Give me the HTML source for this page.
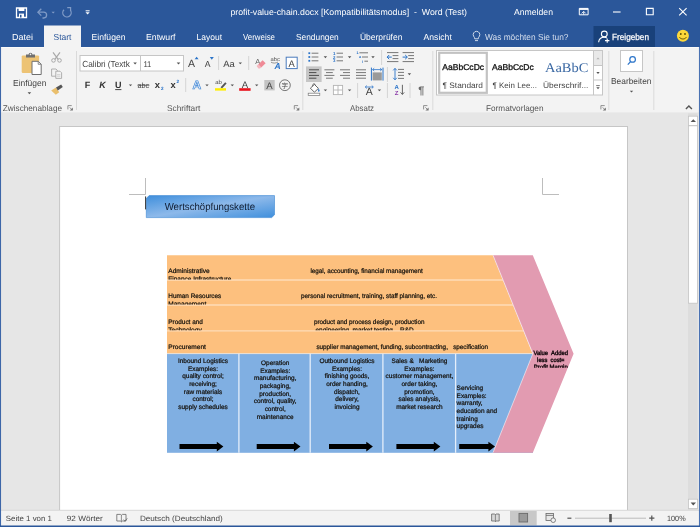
<!DOCTYPE html>
<html lang="de">
<head>
<meta charset="utf-8">
<title>profit-value-chain.docx [Kompatibilitätsmodus] - Word (Test)</title>
<style>
html,body{margin:0;padding:0;width:700px;height:527px;overflow:hidden;background:#e6e6e6}
svg{display:block;will-change:transform;font-family:"Liberation Sans","Noto Sans CJK SC",sans-serif}
text{white-space:pre}
</style>
</head>
<body>
<svg width="700" height="527" viewBox="0 0 700 527" text-rendering="geometricPrecision">
<rect x="0" y="0" width="700" height="527" fill="#e6e6e6"/>
<rect x="0" y="0" width="700" height="47" fill="#2b579a"/>
<rect x="0" y="47" width="700" height="66" fill="#f3f3f3"/>
<rect x="0" y="47" width="700" height="1" fill="#fafafa"/>
<line x1="0" y1="113" x2="700" y2="113" stroke="#dedede" stroke-width="0.8"/>
<path d="M16.5 8h10v9.5h-10z" fill="none" stroke="#fff" stroke-width="1.3"/>
<rect x="18.6" y="8" width="5.8" height="3" fill="#fff"/>
<rect x="19" y="13.6" width="5" height="3.9" fill="#fff"/>
<rect x="20" y="14.8" width="1.5" height="2.7" fill="#2b579a"/>
<path d="M38.5 12.2h5.2a2.9 2.9 0 0 1 0 5.8h-1.2" fill="none" stroke="#7f9ac6" stroke-width="1.3"/>
<path d="M41.3 8.8l-3.4 3.4 3.4 3.4" fill="none" stroke="#7f9ac6" stroke-width="1.3"/>
<path d="M51.5 11.65h3.4l-1.7 1.9z" fill="#7f9ac6"/>
<path d="M70.3 10.2a4.2 4.2 0 1 1 -6.3 -0.4" fill="none" stroke="#7f9ac6" stroke-width="1.3"/>
<path d="M67.2 7.6h3.4v3.4" fill="none" stroke="#7f9ac6" stroke-width="1.2"/>
<rect x="85.6" y="10.3" width="4" height="1" fill="#fff"/>
<path d="M85.5 12.200000000000001h4.2l-2.1 2.4z" fill="#fff"/>
<text x="230.4" y="15.3" font-size="8.7" fill="#fff" textLength="236.6" lengthAdjust="spacingAndGlyphs" xml:space="preserve">profit-value-chain.docx [Kompatibilitätsmodus]  -  Word (Test)</text>
<text x="514" y="15.3" font-size="8.7" fill="#fff" textLength="39" lengthAdjust="spacingAndGlyphs" xml:space="preserve">Anmelden</text>
<path d="M579.3 8.4h8.8v6.4h-8.8z" fill="none" stroke="#fff" stroke-width="1"/>
<rect x="579.3" y="8.4" width="8.8" height="1.5" fill="#fff"/>
<path d="M581.7 13.4l2-2 2 2M583.7 11.6v3" fill="none" stroke="#fff" stroke-width="0.9"/>
<line x1="613" y1="12" x2="620.6" y2="12" stroke="#fff" stroke-width="1.1"/>
<path d="M646.4 8.4h6.8v6.4h-6.8z" fill="none" stroke="#fff" stroke-width="1.1"/>
<path d="M679.2 8.2l7.4 7.2M686.6 8.2l-7.4 7.2" fill="none" stroke="#fff" stroke-width="1.1"/>
<rect x="44" y="25.5" width="37" height="23" fill="#f3f3f3"/>
<text x="12" y="39.6" font-size="8.7" fill="#fff" textLength="21" lengthAdjust="spacingAndGlyphs" xml:space="preserve">Datei</text>
<text x="53.5" y="39.6" font-size="8.7" fill="#2b579a" textLength="18" lengthAdjust="spacingAndGlyphs" xml:space="preserve">Start</text>
<text x="91.5" y="39.6" font-size="8.7" fill="#fff" textLength="34" lengthAdjust="spacingAndGlyphs" xml:space="preserve">Einfügen</text>
<text x="146" y="39.6" font-size="8.7" fill="#fff" textLength="29.5" lengthAdjust="spacingAndGlyphs" xml:space="preserve">Entwurf</text>
<text x="196.5" y="39.6" font-size="8.7" fill="#fff" textLength="25.5" lengthAdjust="spacingAndGlyphs" xml:space="preserve">Layout</text>
<text x="243" y="39.6" font-size="8.7" fill="#fff" textLength="32" lengthAdjust="spacingAndGlyphs" xml:space="preserve">Verweise</text>
<text x="296" y="39.6" font-size="8.7" fill="#fff" textLength="42.7" lengthAdjust="spacingAndGlyphs" xml:space="preserve">Sendungen</text>
<text x="360" y="39.6" font-size="8.7" fill="#fff" textLength="42.4" lengthAdjust="spacingAndGlyphs" xml:space="preserve">Überprüfen</text>
<text x="423.6" y="39.6" font-size="8.7" fill="#fff" textLength="28.2" lengthAdjust="spacingAndGlyphs" xml:space="preserve">Ansicht</text>
<path d="M473.6 36.2a3.3 3.3 0 1 1 5.8 0c-0.8 1-1.1 1.6-1.1 2.6h-3.6c0-1-0.3-1.6-1.1-2.6z" fill="none" stroke="#dfe6f1" stroke-width="0.9"/>
<line x1="475" y1="40.6" x2="478" y2="40.6" stroke="#dfe6f1" stroke-width="0.9"/>
<text x="485" y="39.6" font-size="8.7" fill="#d5deed" textLength="83.5" lengthAdjust="spacingAndGlyphs" xml:space="preserve">Was möchten Sie tun?</text>
<rect x="593.5" y="26" width="61.5" height="21" fill="#19417a"/>
<circle cx="604.3" cy="34" r="2.9" fill="none" stroke="#fff" stroke-width="1.1"/>
<path d="M598.6 42.3c0.4-3.4 2.6-5 5.7-5 1 0 1.9 0.2 2.6 0.6" fill="none" stroke="#fff" stroke-width="1.1"/>
<path d="M605 40.6h4.4M607.2 38.4v4.4" fill="none" stroke="#fff" stroke-width="1.1"/>
<text x="612" y="39.9" font-size="8.9" fill="#fff" textLength="37" lengthAdjust="spacingAndGlyphs" stroke="#fff" stroke-width="0.25" xml:space="preserve">Freigeben</text>
<circle cx="682.9" cy="35.8" r="6" fill="#fdd83a"/>
<circle cx="680.8" cy="34" r="0.9" fill="#5a4a00"/><circle cx="685" cy="34" r="0.9" fill="#5a4a00"/>
<path d="M679.4 37.2c1.6 2.4 5.4 2.4 7 0" fill="none" stroke="#5a4a00" stroke-width="0.9"/>
<rect x="21.7" y="55.4" width="17.4" height="17.6" fill="#edc374" rx="1.2"/>
<path d="M26 54.6h2.6a1.9 1.9 0 0 1 3.8 0h2.6v2.8h-9z" fill="#6f6f6f"/>
<circle cx="30.5" cy="54.4" r="0.8" fill="#f3f3f3"/>
<path d="M32 61.3h6.2l3 3v10.2h-9.2z" fill="#fff" stroke="#6f6f6f" stroke-width="1"/>
<path d="M38.2 61.3v3h3" fill="none" stroke="#6f6f6f" stroke-width="0.8"/>
<text x="13" y="85.7" font-size="8.8" fill="#444" textLength="33.4" lengthAdjust="spacingAndGlyphs" xml:space="preserve">Einfügen</text>
<path d="M27.599999999999998 92.2h3.6l-1.8 2z" fill="#555"/>
<path d="M53 52.4l5.4 7.2M60 52.4l-5.4 7.2" fill="none" stroke="#a8a8a8" stroke-width="1.2"/>
<circle cx="53.5" cy="60.4" r="1.8" fill="#f3f3f3" stroke="#a8a8a8" stroke-width="1"/><circle cx="59.5" cy="60.4" r="1.8" fill="#f3f3f3" stroke="#a8a8a8" stroke-width="1"/>
<path d="M51.6 69h4.4l1.4 1.4v5.8h-5.8z" fill="#f3f3f3" stroke="#a8a8a8" stroke-width="0.9"/>
<path d="M55.8 71.2h4.2l1.6 1.6v5.6h-5.8z" fill="#f3f3f3" stroke="#a8a8a8" stroke-width="0.9"/>
<line x1="57" y1="74.6" x2="60.4" y2="74.6" stroke="#c4c4c4" stroke-width="0.7"/>
<line x1="57" y1="76.2" x2="60.4" y2="76.2" stroke="#c4c4c4" stroke-width="0.7"/>
<path d="M51.2 90.6l4.8-3 3.2 4.6-3.4 2.6z" fill="#eabf6c"/>
<path d="M56 87.6l5.2-3 1.6 2.4-5 3.4z" fill="#555"/>
<rect x="0" y="0" width="0" height="0" fill="none"/>
<text x="2.8" y="110.7" font-size="8.3" fill="#555" textLength="59.2" lengthAdjust="spacingAndGlyphs" xml:space="preserve">Zwischenablage</text>
<path d="M67.89999999999999 109.4v-3.8h3.8" fill="none" stroke="#777" stroke-width="0.8"/>
<path d="M72.89999999999999 107.4v3.2h-3.2z" fill="#777"/>
<line x1="69.7" y1="107.4" x2="72.3" y2="110" stroke="#777" stroke-width="0.8"/>
<line x1="76.5" y1="51" x2="76.5" y2="110" stroke="#dadada" stroke-width="1"/>
<rect x="80" y="55.5" width="103.5" height="15.5" fill="#fff" stroke="#c6c6c6" stroke-width="1"/>
<line x1="140.5" y1="55.5" x2="140.5" y2="71" stroke="#c6c6c6" stroke-width="1"/>
<text x="82.2" y="66.6" font-size="8.8" fill="#444" textLength="47.6" lengthAdjust="spacingAndGlyphs" xml:space="preserve">Calibri (Textk</text>
<path d="M133.29999999999998 62.4h3.6l-1.8 2z" fill="#555"/>
<text x="143.4" y="66.6" font-size="8.4" fill="#444" textLength="8" lengthAdjust="spacingAndGlyphs" xml:space="preserve">11</text>
<path d="M176.7 62.4h3.6l-1.8 2z" fill="#555"/>
<text x="87.5" y="88.2" font-size="9" fill="#333" text-anchor="middle" font-weight="bold" xml:space="preserve">F</text>
<text x="102.6" y="88.2" font-size="9" fill="#333" text-anchor="middle" font-weight="bold" font-style="italic" xml:space="preserve">K</text>
<text x="118.3" y="87.8" font-size="9" fill="#333" text-anchor="middle" font-weight="bold" xml:space="preserve">U</text>
<line x1="115.2" y1="89.6" x2="121.4" y2="89.6" stroke="#333" stroke-width="0.9"/>
<path d="M128.8 84.45h3.4l-1.7 1.9z" fill="#555"/>
<text x="143.4" y="87.6" font-size="7.6" fill="#444" text-anchor="middle" textLength="11.6" lengthAdjust="spacingAndGlyphs" xml:space="preserve">abc</text>
<line x1="137.4" y1="85.2" x2="149.4" y2="85.2" stroke="#444" stroke-width="0.8"/>
<text x="157.4" y="88" font-size="9.4" fill="#333" text-anchor="middle" font-weight="bold" xml:space="preserve">x</text>
<text x="161" y="89.6" font-size="4.6" fill="#2b74c9" font-weight="bold" xml:space="preserve">2</text>
<text x="173" y="88" font-size="9.4" fill="#333" text-anchor="middle" font-weight="bold" xml:space="preserve">x</text>
<text x="176.6" y="83.4" font-size="4.6" fill="#2b74c9" font-weight="bold" xml:space="preserve">2</text>
<line x1="185.7" y1="78" x2="185.7" y2="92" stroke="#d4d4d4" stroke-width="1"/>
<text x="191.4" y="67" font-size="10.5" fill="#444" text-anchor="middle" xml:space="preserve">A</text>
<path d="M194.6 59.3h4l-2.0 -2.6z" fill="#2b74c9"/>
<text x="207.6" y="67" font-size="8.6" fill="#444" text-anchor="middle" xml:space="preserve">A</text>
<path d="M209.8 57.1h4l-2.0 2.6z" fill="#2b74c9"/>
<line x1="218.6" y1="56" x2="218.6" y2="70" stroke="#d4d4d4" stroke-width="1"/>
<text x="223.2" y="67" font-size="9.2" fill="#444" textLength="11.6" lengthAdjust="spacingAndGlyphs" xml:space="preserve">Aa</text>
<path d="M238.60000000000002 62.449999999999996h3.4l-1.7 1.9z" fill="#555"/>
<line x1="248.7" y1="56" x2="248.7" y2="70" stroke="#d4d4d4" stroke-width="1"/>
<text x="257.6" y="63.8" font-size="7.4" fill="#555" text-anchor="middle" xml:space="preserve">A</text>
<path d="M258.2 64.4l4.4-4.2 3 3-4.4 4.2z" fill="#ef8a96"/>
<path d="M256.6 66l1.6-1.6 3 3-1.2 1.2h-1.6z" fill="#f5b6bd"/>
<text x="275.2" y="60.6" font-size="5.6" fill="#555" text-anchor="middle" textLength="9.4" lengthAdjust="spacingAndGlyphs" xml:space="preserve">abc</text>
<text x="277.6" y="68.6" font-size="8.6" fill="#2b74c9" text-anchor="middle" font-weight="bold" font-style="italic" xml:space="preserve">A</text>
<path d="M271 62.2c2.4 1.2 4.6 1.2 7-0.2" fill="none" stroke="#555" stroke-width="0.6"/>
<rect x="286.2" y="57.2" width="11" height="11.4" fill="#fff" stroke="#4a7bbd" stroke-width="1"/>
<text x="291.7" y="66.8" font-size="9.4" fill="#444" text-anchor="middle" xml:space="preserve">A</text>
<text x="196.9" y="89.4" font-size="12" fill="#eef4fb" text-anchor="middle" font-weight="bold" stroke="#3f86d6" stroke-width="0.7" xml:space="preserve">A</text>
<path d="M205.3 84.45h3.4l-1.7 1.9z" fill="#555"/>
<text x="218.6" y="84.4" font-size="5.8" fill="#444" text-anchor="middle" textLength="6.6" lengthAdjust="spacingAndGlyphs" xml:space="preserve">ab</text>
<path d="M220.6 87.2l4.6-5 1.4 1.2-4.6 5z" fill="#555"/>
<rect x="215" y="88.2" width="11" height="2.4" fill="#ffee00"/>
<path d="M230.60000000000002 84.45h3.4l-1.7 1.9z" fill="#555"/>
<text x="245" y="87.6" font-size="9.6" fill="#444" text-anchor="middle" xml:space="preserve">A</text>
<rect x="239.2" y="88.2" width="11.4" height="2.6" fill="#e8131d"/>
<path d="M255.0 84.45h3.4l-1.7 1.9z" fill="#555"/>
<rect x="264.3" y="80" width="10.4" height="10.4" fill="#c4c4c4"/>
<text x="269.5" y="88.8" font-size="9.6" fill="#444" text-anchor="middle" xml:space="preserve">A</text>
<circle cx="284.9" cy="85.2" r="5.4" fill="none" stroke="#555" stroke-width="0.8"/>
<text x="284.9" y="87.9" font-size="6.6" fill="#444" text-anchor="middle" font-family="Liberation Sans, Noto Sans CJK SC, sans-serif" xml:space="preserve">字</text>
<text x="167" y="110.7" font-size="8.3" fill="#555" textLength="33.3" lengthAdjust="spacingAndGlyphs" xml:space="preserve">Schriftart</text>
<path d="M294.3 109.4v-3.8h3.8" fill="none" stroke="#777" stroke-width="0.8"/>
<path d="M299.3 107.4v3.2h-3.2z" fill="#777"/>
<line x1="296.09999999999997" y1="107.4" x2="298.7" y2="110" stroke="#777" stroke-width="0.8"/>
<line x1="302.8" y1="51" x2="302.8" y2="110" stroke="#dadada" stroke-width="1"/>
<rect x="308.4" y="52.300000000000004" width="1.8" height="1.8" fill="#2b74c9"/>
<line x1="311.6" y1="53.2" x2="318.4" y2="53.2" stroke="#777" stroke-width="1"/>
<rect x="308.4" y="56.1" width="1.8" height="1.8" fill="#2b74c9"/>
<line x1="311.6" y1="57" x2="318.4" y2="57" stroke="#777" stroke-width="1"/>
<rect x="308.4" y="59.9" width="1.8" height="1.8" fill="#2b74c9"/>
<line x1="311.6" y1="60.8" x2="318.4" y2="60.8" stroke="#777" stroke-width="1"/>
<path d="M323.7 56.25h3.4l-1.7 1.9z" fill="#555"/>
<text x="333" y="54.800000000000004" font-size="4.4" fill="#2b74c9" font-weight="bold" xml:space="preserve">1</text>
<line x1="336.6" y1="53.2" x2="343" y2="53.2" stroke="#777" stroke-width="1"/>
<text x="333" y="58.6" font-size="4.4" fill="#2b74c9" font-weight="bold" xml:space="preserve">2</text>
<line x1="336.6" y1="57" x2="343" y2="57" stroke="#777" stroke-width="1"/>
<text x="333" y="62.4" font-size="4.4" fill="#2b74c9" font-weight="bold" xml:space="preserve">3</text>
<line x1="336.6" y1="60.8" x2="343" y2="60.8" stroke="#777" stroke-width="1"/>
<path d="M347.90000000000003 56.25h3.4l-1.7 1.9z" fill="#555"/>
<text x="356.6" y="54.4" font-size="3.8" fill="#2b74c9" font-weight="bold" xml:space="preserve">1</text>
<line x1="359.4" y1="52.8" x2="368" y2="52.8" stroke="#777" stroke-width="1"/>
<text x="359" y="58.4" font-size="3.8" fill="#2b74c9" font-weight="bold" xml:space="preserve">a</text>
<line x1="362" y1="57" x2="368" y2="57" stroke="#777" stroke-width="1"/>
<text x="361.8" y="62.6" font-size="3.8" fill="#2b74c9" font-weight="bold" xml:space="preserve">i</text>
<line x1="364.4" y1="61.2" x2="368" y2="61.2" stroke="#777" stroke-width="1"/>
<path d="M371.3 56.25h3.4l-1.7 1.9z" fill="#555"/>
<line x1="381.6" y1="50" x2="381.6" y2="65" stroke="#d4d4d4" stroke-width="1"/>
<line x1="387" y1="52.6" x2="398.4" y2="52.6" stroke="#777" stroke-width="1"/>
<line x1="387" y1="61.6" x2="398.4" y2="61.6" stroke="#777" stroke-width="1"/>
<line x1="392.6" y1="55.6" x2="398.4" y2="55.6" stroke="#777" stroke-width="1"/>
<line x1="392.6" y1="58.6" x2="398.4" y2="58.6" stroke="#777" stroke-width="1"/>
<path d="M391.8 57.1h-4.6M389.2 55l-2.1 2.1 2.1 2.1" fill="none" stroke="#2b74c9" stroke-width="1"/>
<line x1="402.6" y1="52.6" x2="414.0" y2="52.6" stroke="#777" stroke-width="1"/>
<line x1="402.6" y1="61.6" x2="414.0" y2="61.6" stroke="#777" stroke-width="1"/>
<line x1="408.20000000000005" y1="55.6" x2="414.0" y2="55.6" stroke="#777" stroke-width="1"/>
<line x1="408.20000000000005" y1="58.6" x2="414.0" y2="58.6" stroke="#777" stroke-width="1"/>
<path d="M402.6 57.1h4.6M405.20000000000005 55l2.1 2.1-2.1 2.1" fill="none" stroke="#2b74c9" stroke-width="1"/>
<rect x="306" y="66.4" width="15.6" height="15.6" fill="#c6c6c6"/>
<line x1="309" y1="69.8" x2="319" y2="69.8" stroke="#4a4a4a" stroke-width="1"/>
<line x1="309" y1="72.6" x2="316.4" y2="72.6" stroke="#4a4a4a" stroke-width="1"/>
<line x1="309" y1="75.4" x2="319" y2="75.4" stroke="#4a4a4a" stroke-width="1"/>
<line x1="309" y1="78.2" x2="316.4" y2="78.2" stroke="#4a4a4a" stroke-width="1"/>
<line x1="324.4" y1="69.8" x2="334.4" y2="69.8" stroke="#777" stroke-width="1"/>
<line x1="326" y1="72.6" x2="332.8" y2="72.6" stroke="#777" stroke-width="1"/>
<line x1="324.4" y1="75.4" x2="334.4" y2="75.4" stroke="#777" stroke-width="1"/>
<line x1="326" y1="78.2" x2="332.8" y2="78.2" stroke="#777" stroke-width="1"/>
<line x1="340" y1="69.8" x2="350" y2="69.8" stroke="#777" stroke-width="1"/>
<line x1="343" y1="72.6" x2="350" y2="72.6" stroke="#777" stroke-width="1"/>
<line x1="340" y1="75.4" x2="350" y2="75.4" stroke="#777" stroke-width="1"/>
<line x1="343" y1="78.2" x2="350" y2="78.2" stroke="#777" stroke-width="1"/>
<line x1="356" y1="69.8" x2="366" y2="69.8" stroke="#777" stroke-width="1"/>
<line x1="356" y1="72.6" x2="366" y2="72.6" stroke="#777" stroke-width="1"/>
<line x1="356" y1="75.4" x2="366" y2="75.4" stroke="#777" stroke-width="1"/>
<line x1="356" y1="78.2" x2="366" y2="78.2" stroke="#777" stroke-width="1"/>
<rect x="372.6" y="72.4" width="9.2" height="8" fill="#9a9a9a"/>
<line x1="371.4" y1="67.6" x2="371.4" y2="80.6" stroke="#2b74c9" stroke-width="1"/>
<line x1="383" y1="67.6" x2="383" y2="80.6" stroke="#2b74c9" stroke-width="1"/>
<path d="M372.6 69.6h9.2M374.2 68.2l-1.6 1.4 1.6 1.4M380.2 68.2l1.6 1.4-1.6 1.4" fill="none" stroke="#2b74c9" stroke-width="0.8"/>
<line x1="387.4" y1="67" x2="387.4" y2="82" stroke="#d4d4d4" stroke-width="1"/>
<line x1="398" y1="69.4" x2="404" y2="69.4" stroke="#777" stroke-width="1"/>
<line x1="398" y1="72.4" x2="404" y2="72.4" stroke="#777" stroke-width="1"/>
<line x1="398" y1="75.4" x2="404" y2="75.4" stroke="#777" stroke-width="1"/>
<line x1="398" y1="78.4" x2="404" y2="78.4" stroke="#777" stroke-width="1"/>
<path d="M395 68.4v11.4M393.2 70.4l1.8-2 1.8 2M393.2 77.8l1.8 2 1.8-2" fill="none" stroke="#2b74c9" stroke-width="0.9"/>
<path d="M407.7 73.25h3.4l-1.7 1.9z" fill="#555"/>
<path d="M310.4 88.2l4-3.8 4 4-4 3.8z" fill="#fff" stroke="#555" stroke-width="0.9"/>
<path d="M312.6 86.4c-0.6-2.8 2.4-3.6 2.8-1" fill="none" stroke="#555" stroke-width="0.8"/>
<path d="M318.6 88.6c1 1.4 1.4 2.2 0.6 3-0.8 0.6-1.8-0.2-0.6-3z" fill="#2b74c9"/>
<rect x="308.2" y="93.2" width="11.6" height="2.2" fill="#fff" stroke="#777" stroke-width="0.7"/>
<path d="M323.7 89.45h3.4l-1.7 1.9z" fill="#555"/>
<rect x="333.4" y="85.4" width="9.2" height="9.2" fill="#fff" stroke="#b4b4b4" stroke-width="0.9"/>
<line x1="338" y1="85.4" x2="338" y2="94.6" stroke="#b4b4b4" stroke-width="0.9"/>
<line x1="333.4" y1="90" x2="342.6" y2="90" stroke="#b4b4b4" stroke-width="0.9"/>
<path d="M347.90000000000003 89.45h3.4l-1.7 1.9z" fill="#555"/>
<line x1="357.6" y1="83" x2="357.6" y2="98" stroke="#d4d4d4" stroke-width="1"/>
<text x="369.2" y="94.8" font-size="10.5" fill="#444" text-anchor="middle" transform="translate(0,0)" xml:space="preserve">A</text>
<path d="M365.6 87h7.4M366.8 85.6l-1.6 1.4 1.6 1.4M371.8 85.6l1.6 1.4-1.6 1.4" fill="none" stroke="#2b74c9" stroke-width="0.8"/>
<path d="M377.7 89.45h3.4l-1.7 1.9z" fill="#555"/>
<line x1="387.4" y1="83" x2="387.4" y2="98" stroke="#d4d4d4" stroke-width="1"/>
<text x="396.6" y="88.6" font-size="6" fill="#2b74c9" text-anchor="middle" font-weight="bold" xml:space="preserve">A</text>
<text x="396.6" y="94.8" font-size="6" fill="#8a3aa8" text-anchor="middle" font-weight="bold" xml:space="preserve">Z</text>
<path d="M402.4 84.8v9.6M400.6 92.4l1.8 2 1.8-2" fill="none" stroke="#555" stroke-width="0.9"/>
<line x1="410" y1="83" x2="410" y2="98" stroke="#d4d4d4" stroke-width="1"/>
<text x="421.4" y="94.4" font-size="11" fill="#6a6a6a" text-anchor="middle" font-weight="bold" xml:space="preserve">¶</text>
<text x="350" y="110.7" font-size="8.3" fill="#555" textLength="24" lengthAdjust="spacingAndGlyphs" xml:space="preserve">Absatz</text>
<path d="M423.6 109.4v-3.8h3.8" fill="none" stroke="#777" stroke-width="0.8"/>
<path d="M428.6 107.4v3.2h-3.2z" fill="#777"/>
<line x1="425.4" y1="107.4" x2="428" y2="110" stroke="#777" stroke-width="0.8"/>
<line x1="432.8" y1="51" x2="432.8" y2="110" stroke="#dadada" stroke-width="1"/>
<rect x="436.5" y="50.5" width="166" height="44.5" fill="#fff" stroke="#c6c6c6" stroke-width="1"/>
<rect x="439.2" y="52.8" width="47.6" height="40" fill="#fff" stroke="#c2c2c2" stroke-width="2.2"/>
<text x="442.3" y="70" font-size="8.4" fill="#111" textLength="41.8" lengthAdjust="spacingAndGlyphs" stroke="#111" stroke-width="0.3" xml:space="preserve">AaBbCcDc</text>
<text x="442.6" y="88" font-size="8" fill="#444" textLength="40.4" lengthAdjust="spacingAndGlyphs" xml:space="preserve">¶ Standard</text>
<text x="492" y="70" font-size="8.4" fill="#111" textLength="41.8" lengthAdjust="spacingAndGlyphs" stroke="#111" stroke-width="0.3" xml:space="preserve">AaBbCcDc</text>
<text x="492.6" y="88" font-size="8" fill="#444" textLength="44.4" lengthAdjust="spacingAndGlyphs" xml:space="preserve">¶ Kein Lee...</text>
<text x="545" y="72.4" font-size="13.4" fill="#3a68a3" textLength="43.4" lengthAdjust="spacingAndGlyphs" font-family="Liberation Serif, serif" xml:space="preserve">AaBbC</text>
<text x="543" y="88" font-size="8" fill="#444" textLength="45.4" lengthAdjust="spacingAndGlyphs" xml:space="preserve">Überschrif...</text>
<line x1="593.5" y1="50.5" x2="593.5" y2="95" stroke="#c6c6c6" stroke-width="1"/>
<rect x="594" y="51" width="8" height="14.4" fill="#e9e9e9"/>
<line x1="593.5" y1="65.5" x2="602.5" y2="65.5" stroke="#c6c6c6" stroke-width="1"/>
<line x1="593.5" y1="80" x2="602.5" y2="80" stroke="#c6c6c6" stroke-width="1"/>
<path d="M596.3 59.35h3.4l-1.7 -1.9z" fill="#b5b5b5"/>
<path d="M596.3 72.05h3.4l-1.7 1.9z" fill="#555"/>
<line x1="596.2" y1="85.6" x2="599.8" y2="85.6" stroke="#555" stroke-width="0.8"/>
<path d="M596.3 87.25h3.4l-1.7 1.9z" fill="#555"/>
<text x="486" y="110.7" font-size="8.3" fill="#555" textLength="57.5" lengthAdjust="spacingAndGlyphs" xml:space="preserve">Formatvorlagen</text>
<path d="M600.9 109.4v-3.8h3.8" fill="none" stroke="#777" stroke-width="0.8"/>
<path d="M605.9 107.4v3.2h-3.2z" fill="#777"/>
<line x1="602.6999999999999" y1="107.4" x2="605.3" y2="110" stroke="#777" stroke-width="0.8"/>
<line x1="608.8" y1="51" x2="608.8" y2="110" stroke="#dadada" stroke-width="1"/>
<rect x="620.5" y="50.5" width="22" height="21" fill="#fff" stroke="#c6c6c6" stroke-width="1"/>
<circle cx="632.6" cy="59.4" r="2.8" fill="none" stroke="#2b74c9" stroke-width="1.2"/>
<line x1="630.6" y1="61.6" x2="627.8" y2="64.6" stroke="#2b74c9" stroke-width="1.3"/>
<text x="611" y="83.6" font-size="8.6" fill="#444" textLength="40.5" lengthAdjust="spacingAndGlyphs" xml:space="preserve">Bearbeiten</text>
<path d="M629.8 90.64999999999999h3.4l-1.7 1.9z" fill="#555"/>
<line x1="653.8" y1="51" x2="653.8" y2="110" stroke="#dadada" stroke-width="1"/>
<path d="M685.9 109.1l3-3 3 3" fill="none" stroke="#555" stroke-width="1.4"/>
<rect x="0" y="113" width="700" height="14" fill="#e6e6e6"/>
<rect x="59.6" y="126.5" width="567.9" height="384.5" fill="#fff" stroke="#c6c6c6" stroke-width="1"/>
<path d="M145.5 178v16.5h-16.5" fill="none" stroke="#bdbdbd" stroke-width="1"/>
<path d="M542.5 178v16.5h16.5" fill="none" stroke="#bdbdbd" stroke-width="1"/>
<defs><linearGradient id="tg" x1="0" y1="0" x2="1" y2="1"><stop offset="0" stop-color="#3f8fdc"/><stop offset="0.5" stop-color="#8db9ea"/><stop offset="1" stop-color="#3f8fdc"/></linearGradient></defs>
<path d="M146.3 198.4l2.8-2.8h125.4v19.2l-2.8 2.8h-125.4z" fill="url(#tg)" stroke="#3a86d2" stroke-width="0.6"/>
<line x1="145.6" y1="196.4" x2="145.6" y2="209.4" stroke="#333" stroke-width="1"/>
<text x="164.7" y="209.7" font-size="10.1" fill="#0e1a2e" textLength="90.3" lengthAdjust="spacingAndGlyphs" xml:space="preserve">Wertschöpfungskette</text>
<path d="M167 255.2h326l39.6 98.4h-365.6z" fill="#fdc07e"/>
<line x1="167" y1="280" x2="533" y2="280" stroke="#fedcb8" stroke-width="1.3"/>
<line x1="167" y1="305" x2="533" y2="305" stroke="#fedcb8" stroke-width="1.3"/>
<line x1="167" y1="330.8" x2="533" y2="330.8" stroke="#fedcb8" stroke-width="1.3"/>
<rect x="167" y="353.6" width="366" height="99.2" fill="#80afe2"/>
<line x1="238.9" y1="353.6" x2="238.9" y2="452.8" stroke="#e4eefa" stroke-width="1.3"/>
<line x1="310.2" y1="353.6" x2="310.2" y2="452.8" stroke="#e4eefa" stroke-width="1.3"/>
<line x1="382.9" y1="353.6" x2="382.9" y2="452.8" stroke="#e4eefa" stroke-width="1.3"/>
<line x1="455.6" y1="353.6" x2="455.6" y2="452.8" stroke="#e4eefa" stroke-width="1.3"/>
<path d="M492.8 255.2h40l40.8 98.6-40.8 99h-40l40-99z" fill="#e29bb1"/>
<path d="M492.8 255.2l40 98.4-40 99h200v-200z" fill="none"/>
<path d="M493 255.2l39.9 98.4-39.9 99" fill="none" stroke="#fff" stroke-width="0.55"/>
<line x1="167" y1="353.6" x2="533" y2="353.6" stroke="#f6e4d2" stroke-width="0.8"/>
<clipPath id="c1"><rect x="167" y="255" width="370" height="24.4"/></clipPath>
<clipPath id="c2"><rect x="167" y="280" width="370" height="24.4"/></clipPath>
<clipPath id="c3"><rect x="167" y="305" width="370" height="25.2"/></clipPath>
<clipPath id="c4"><rect x="167" y="331" width="370" height="22"/></clipPath>
<g stroke="#14110c" stroke-width="0.22">
<g clip-path="url(#c1)">
<text x="168.3" y="273" font-size="6.45" fill="#14110c" textLength="41.4" lengthAdjust="spacingAndGlyphs" xml:space="preserve">Administrative</text>
<text x="168.3" y="281" font-size="6.45" fill="#14110c" textLength="63" lengthAdjust="spacingAndGlyphs" xml:space="preserve">Finance Infrastructure</text>
<text x="310.4" y="273" font-size="6.45" fill="#14110c" textLength="112.5" lengthAdjust="spacingAndGlyphs" xml:space="preserve">legal, accounting, financial management</text>
</g><g clip-path="url(#c2)">
<text x="168.3" y="297.9" font-size="6.45" fill="#14110c" textLength="53" lengthAdjust="spacingAndGlyphs" xml:space="preserve">Human Resources</text>
<text x="168.3" y="305.9" font-size="6.45" fill="#14110c" textLength="38" lengthAdjust="spacingAndGlyphs" xml:space="preserve">Management</text>
<text x="301.1" y="297.9" font-size="6.45" fill="#14110c" textLength="135.9" lengthAdjust="spacingAndGlyphs" xml:space="preserve">personal recruitment, training, staff planning, etc.</text>
</g><g clip-path="url(#c3)">
<text x="168.3" y="323.7" font-size="6.45" fill="#14110c" textLength="34.6" lengthAdjust="spacingAndGlyphs" xml:space="preserve">Product and</text>
<text x="168.3" y="331.7" font-size="6.45" fill="#14110c" textLength="33.4" lengthAdjust="spacingAndGlyphs" xml:space="preserve">Technology</text>
<text x="314" y="323.5" font-size="6.45" fill="#14110c" textLength="110.4" lengthAdjust="spacingAndGlyphs" xml:space="preserve">product and process design, production</text>
<text x="315.5" y="331.5" font-size="6.45" fill="#14110c" textLength="98.1" lengthAdjust="spacingAndGlyphs" xml:space="preserve">engineering, market testing,   R&amp;D</text>
</g><g clip-path="url(#c4)">
<text x="168.3" y="348.8" font-size="6.45" fill="#14110c" textLength="37.6" lengthAdjust="spacingAndGlyphs" xml:space="preserve">Procurement</text>
<text x="316.4" y="348.6" font-size="6.45" fill="#14110c" textLength="171.6" lengthAdjust="spacingAndGlyphs" xml:space="preserve">supplier management, funding, subcontracting,   specification</text>
</g>
<text x="203" y="362.9" font-size="6.45" fill="#14110c" text-anchor="middle" xml:space="preserve">Inbound Logistics</text>
<text x="203" y="370.56" font-size="6.45" fill="#14110c" text-anchor="middle" xml:space="preserve">Examples:</text>
<text x="203" y="378.22" font-size="6.45" fill="#14110c" text-anchor="middle" xml:space="preserve">quality control;</text>
<text x="203" y="385.88" font-size="6.45" fill="#14110c" text-anchor="middle" xml:space="preserve">receiving;</text>
<text x="203" y="393.54" font-size="6.45" fill="#14110c" text-anchor="middle" xml:space="preserve">raw materials</text>
<text x="203" y="401.2" font-size="6.45" fill="#14110c" text-anchor="middle" xml:space="preserve">control;</text>
<text x="203" y="408.86" font-size="6.45" fill="#14110c" text-anchor="middle" xml:space="preserve">supply schedules</text>
<text x="275.2" y="364.9" font-size="6.45" fill="#14110c" text-anchor="middle" xml:space="preserve">Operation</text>
<text x="275.2" y="372.56" font-size="6.45" fill="#14110c" text-anchor="middle" xml:space="preserve">Examples:</text>
<text x="275.2" y="380.22" font-size="6.45" fill="#14110c" text-anchor="middle" xml:space="preserve">manufacturing,</text>
<text x="275.2" y="387.88" font-size="6.45" fill="#14110c" text-anchor="middle" xml:space="preserve">packaging,</text>
<text x="275.2" y="395.54" font-size="6.45" fill="#14110c" text-anchor="middle" xml:space="preserve">production,</text>
<text x="275.2" y="403.2" font-size="6.45" fill="#14110c" text-anchor="middle" xml:space="preserve">control, quality,</text>
<text x="275.2" y="410.86" font-size="6.45" fill="#14110c" text-anchor="middle" xml:space="preserve">control,</text>
<text x="275.2" y="418.52" font-size="6.45" fill="#14110c" text-anchor="middle" xml:space="preserve">maintenance</text>
<text x="347" y="362.9" font-size="6.45" fill="#14110c" text-anchor="middle" xml:space="preserve">Outbound Logistics</text>
<text x="347" y="370.56" font-size="6.45" fill="#14110c" text-anchor="middle" xml:space="preserve">Examples:</text>
<text x="347" y="378.22" font-size="6.45" fill="#14110c" text-anchor="middle" xml:space="preserve">finishing goods,</text>
<text x="347" y="385.88" font-size="6.45" fill="#14110c" text-anchor="middle" xml:space="preserve">order handing,</text>
<text x="347" y="393.54" font-size="6.45" fill="#14110c" text-anchor="middle" xml:space="preserve">dispatch,</text>
<text x="347" y="401.2" font-size="6.45" fill="#14110c" text-anchor="middle" xml:space="preserve">delivery,</text>
<text x="347" y="408.86" font-size="6.45" fill="#14110c" text-anchor="middle" xml:space="preserve">invoicing</text>
<text x="419.4" y="362.9" font-size="6.45" fill="#14110c" text-anchor="middle" xml:space="preserve">Sales &amp;   Marketing</text>
<text x="419.4" y="370.56" font-size="6.45" fill="#14110c" text-anchor="middle" xml:space="preserve">Examples:</text>
<text x="419.4" y="378.22" font-size="6.45" fill="#14110c" text-anchor="middle" xml:space="preserve">customer management,</text>
<text x="419.4" y="385.88" font-size="6.45" fill="#14110c" text-anchor="middle" xml:space="preserve">order taking,</text>
<text x="419.4" y="393.54" font-size="6.45" fill="#14110c" text-anchor="middle" xml:space="preserve">promotion,</text>
<text x="419.4" y="401.2" font-size="6.45" fill="#14110c" text-anchor="middle" xml:space="preserve">sales analysis,</text>
<text x="419.4" y="408.86" font-size="6.45" fill="#14110c" text-anchor="middle" xml:space="preserve">market research</text>
<text x="456.6" y="390.1" font-size="6.45" fill="#14110c" xml:space="preserve">Servicing</text>
<text x="456.6" y="397.76" font-size="6.45" fill="#14110c" xml:space="preserve">Examples:</text>
<text x="456.6" y="405.42" font-size="6.45" fill="#14110c" xml:space="preserve">warranty,</text>
<text x="456.6" y="413.08" font-size="6.45" fill="#14110c" xml:space="preserve">education and</text>
<text x="456.6" y="420.74" font-size="6.45" fill="#14110c" xml:space="preserve">training</text>
<text x="456.6" y="428.4" font-size="6.45" fill="#14110c" xml:space="preserve">upgrades</text>
</g>
<clipPath id="c5"><rect x="525" y="340" width="60" height="27.8"/></clipPath><g clip-path="url(#c5)">
<text x="550.8" y="355" font-size="6.2" fill="#1a0d12" text-anchor="middle" textLength="34.6" lengthAdjust="spacingAndGlyphs" stroke="#1a0d12" stroke-width="0.4" xml:space="preserve">Value  Added</text>
<text x="550.8" y="362" font-size="6.2" fill="#1a0d12" text-anchor="middle" textLength="27.4" lengthAdjust="spacingAndGlyphs" stroke="#1a0d12" stroke-width="0.4" xml:space="preserve">less  cost=</text>
<text x="550.8" y="369.2" font-size="6.2" fill="#1a0d12" text-anchor="middle" textLength="34" lengthAdjust="spacingAndGlyphs" stroke="#1a0d12" stroke-width="0.4" xml:space="preserve">Profit Margin</text>
</g>
<path d="M179.5 444.1H216.8V441.70000000000005L223.4 446.6L216.8 451.5V449.1H179.5z" fill="#000"/>
<path d="M256.7 444.1H293.9V441.70000000000005L300.5 446.6L293.9 451.5V449.1H256.7z" fill="#000"/>
<path d="M329 444.1H366.29999999999995V441.70000000000005L372.9 446.6L366.29999999999995 451.5V449.1H329z" fill="#000"/>
<path d="M396.4 444.1H433.79999999999995V441.70000000000005L440.4 446.6L433.79999999999995 451.5V449.1H396.4z" fill="#000"/>
<path d="M459.2 444.1H488.4V441.70000000000005L495 446.6L488.4 451.5V449.1H459.2z" fill="#000"/>
<rect x="688" y="113.4" width="9.8" height="396.6" fill="#dddddd"/>
<rect x="697.8" y="113.4" width="1.2" height="396.6" fill="#ececec"/>
<rect x="688.4" y="116.2" width="9.2" height="9.4" fill="#fff" stroke="#c4c4c4" stroke-width="0.8"/>
<path d="M690.5999999999999 122.05h5.4l-2.7 -2.9z" fill="#555"/>
<rect x="688.4" y="125.8" width="9.2" height="177.4" fill="#fff" stroke="#c4c4c4" stroke-width="0.8"/>
<rect x="688.4" y="499.2" width="9.2" height="9.4" fill="#fff" stroke="#c4c4c4" stroke-width="0.8"/>
<path d="M690.5999999999999 502.55h5.4l-2.7 2.9z" fill="#555"/>
<rect x="0" y="510" width="700" height="17" fill="#f3f3f3"/>
<line x1="0" y1="510.3" x2="700" y2="510.3" stroke="#d0d0d0" stroke-width="0.8"/>
<text x="5.8" y="520.6" font-size="7.7" fill="#444" textLength="46.2" lengthAdjust="spacingAndGlyphs" xml:space="preserve">Seite 1 von 1</text>
<text x="66.8" y="520.6" font-size="7.7" fill="#444" textLength="36" lengthAdjust="spacingAndGlyphs" xml:space="preserve">92 Wörter</text>
<path d="M116.8 514.4h3.6l1 0.8 1-0.8h3.6v6.6h-3.6l-1 0.8-1-0.8h-3.6z" fill="none" stroke="#666" stroke-width="0.8"/>
<line x1="121.4" y1="515.2" x2="121.4" y2="521.8" stroke="#666" stroke-width="0.7"/>
<path d="M123.6 519.8l1.4 1.4 2.2-2.8" fill="none" stroke="#666" stroke-width="0.9"/>
<text x="139.9" y="520.6" font-size="7.7" fill="#444" textLength="82.9" lengthAdjust="spacingAndGlyphs" xml:space="preserve">Deutsch (Deutschland)</text>
<path d="M491.6 514h3.2l0.6 0.6 0.6-0.6h3.2v7h-3.2l-0.6 0.6-0.6-0.6h-3.2z" fill="#d8d8d8" stroke="#666" stroke-width="0.8"/>
<line x1="495.4" y1="514.6" x2="495.4" y2="521.6" stroke="#666" stroke-width="0.7"/>
<rect x="510" y="511" width="26.7" height="14.4" fill="#c8c8c8"/>
<rect x="519" y="513.4" width="8.6" height="8.6" fill="#9a9a9a" stroke="#6a6a6a" stroke-width="0.9"/>
<rect x="546" y="513.6" width="7.4" height="7" fill="#e8e8e8" stroke="#666" stroke-width="0.8"/>
<line x1="546" y1="515.4" x2="553.4" y2="515.4" stroke="#666" stroke-width="0.8"/>
<circle cx="553.2" cy="520.2" r="2.3" fill="#f3f3f3" stroke="#666" stroke-width="0.8"/>
<line x1="567.4" y1="518.2" x2="571.4" y2="518.2" stroke="#555" stroke-width="1.2"/>
<line x1="575" y1="518.2" x2="646" y2="518.2" stroke="#bcbcbc" stroke-width="1"/>
<rect x="609.2" y="514" width="2.6" height="8.2" fill="#555"/>
<path d="M649.2 518.2h5.2M651.8 515.6v5.2" fill="none" stroke="#555" stroke-width="1.2"/>
<text x="667" y="520.6" font-size="7.7" fill="#444" textLength="18.6" lengthAdjust="spacingAndGlyphs" xml:space="preserve">100%</text>
<line x1="0.5" y1="47" x2="0.5" y2="527" stroke="#3d66a8" stroke-width="1.1"/>
<line x1="699.5" y1="47" x2="699.5" y2="527" stroke="#4a72b2" stroke-width="1.1"/>
<line x1="0" y1="526.2" x2="700" y2="526.2" stroke="#2b579a" stroke-width="1.6"/>
</svg>
</body>
</html>
